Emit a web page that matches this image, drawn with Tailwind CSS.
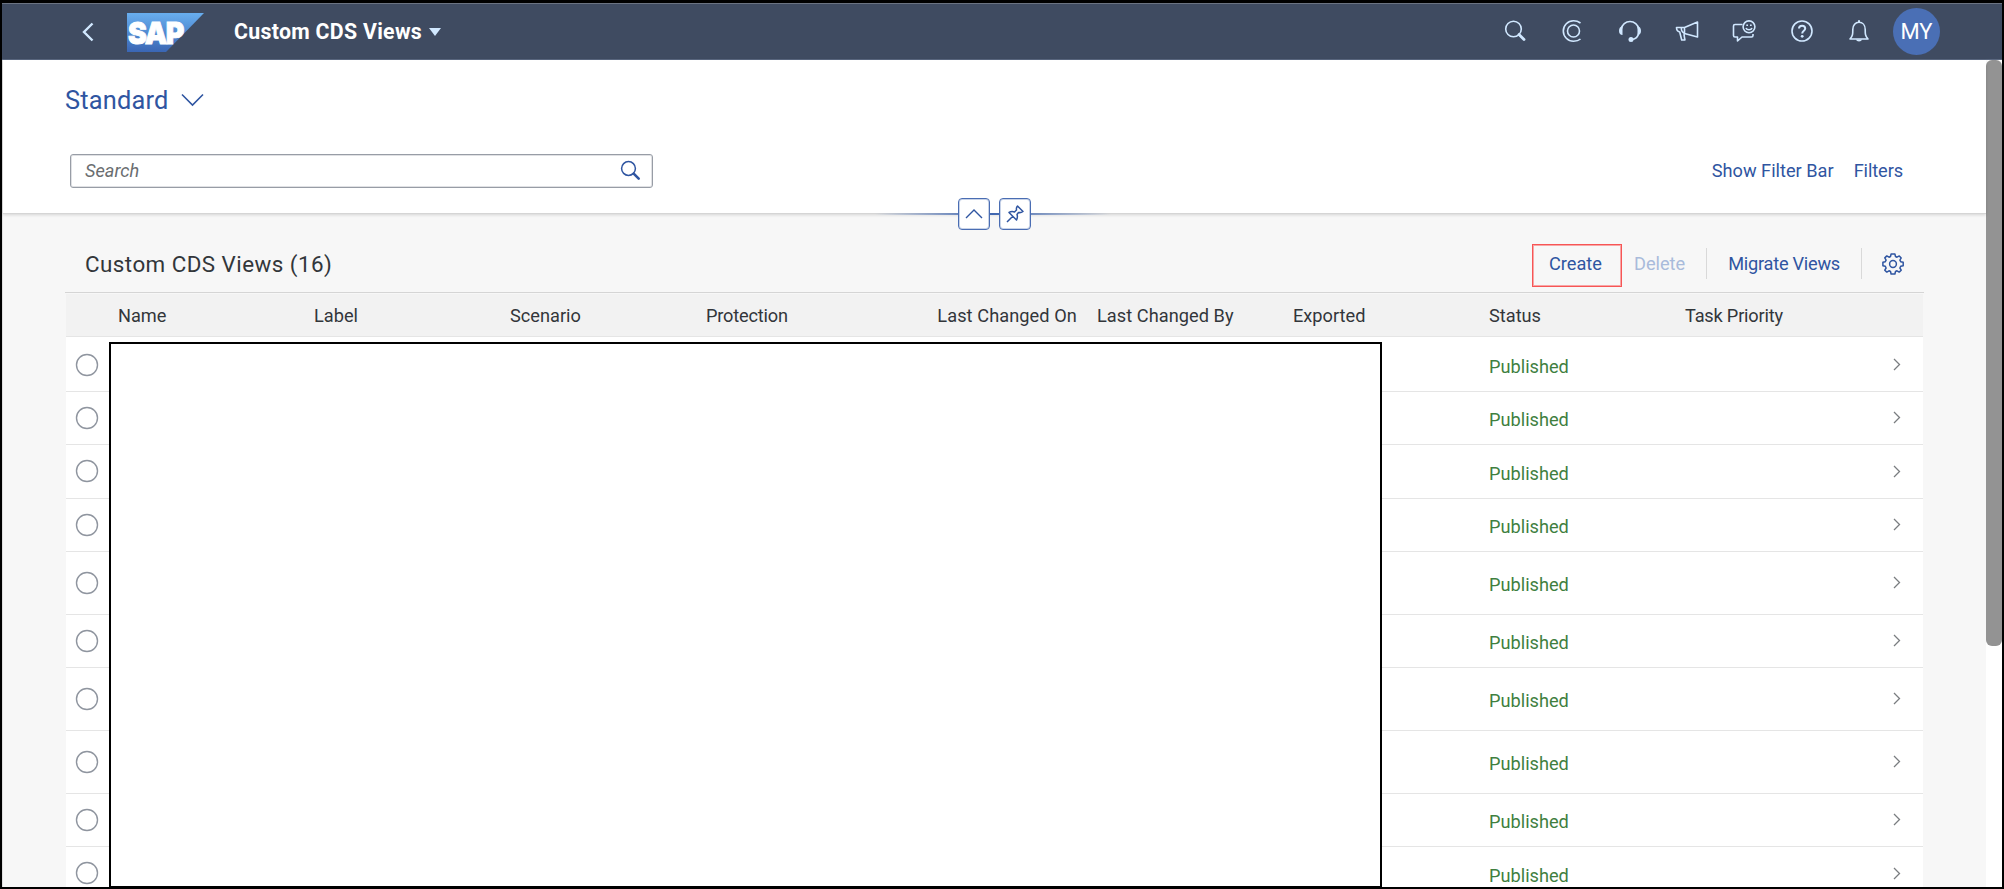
<!DOCTYPE html>
<html lang="en">
<head>
<meta charset="utf-8">
<title>Custom CDS Views</title>
<script src="https://cdn.jsdelivr.net/npm/@tailwindcss/browser@4"></script>
</head>
<body class="w-[2004px] h-[889px] overflow-hidden bg-black font-['Roboto',sans-serif] text-[#32363a] text-[18.2px] whitespace-nowrap">
<div class="relative w-[2004px] h-[889px] overflow-hidden border-l-2 border-r-2 border-t-[3px] border-b-2 border-black bg-[#f7f7f7] flex flex-col">
  <header class="h-[57px] shrink-0 bg-[#3f4b61] border-t border-b border-t-[#6b7382] border-b-[#5b6880] flex items-center">
    <svg class="ml-[80px] shrink-0" width="12" height="20" viewBox="0 0 12 20" fill="none" stroke="#d1e8ff" stroke-width="2.4"><path d="M10.500 1.500 2 10l8.500 8.500"/></svg>
    <svg class="ml-[33px] shrink-0 mt-[2px]" width="77" height="39" viewBox="0 0 77 39"><defs><linearGradient id="g" x1="0" y1="0" x2="0" y2="1"><stop offset="0" stop-color="#68aeef"/><stop offset="1" stop-color="#3a66b4"/></linearGradient></defs><path d="M0 0h77L39 39H0z" fill="url(#g)"/><text x="1" y="30.500" textLength="55" lengthAdjust="spacingAndGlyphs" letter-spacing="-1.500" font-family="Inter" font-weight="900" font-size="30.500" fill="#fff" stroke="#fff" stroke-width="0.900">SAP</text></svg>
    <h1 class="ml-[30px] pt-px text-[21.3px] font-bold text-white tracking-[0.3px]">Custom CDS Views</h1>
    <svg class="ml-[7px] shrink-0" width="12" height="8" viewBox="0 0 12 8"><path d="M0 0h12L6 8z" fill="#d1e8ff"/></svg>
    <div class="ml-auto mr-[62px] flex items-center">
      <div class="flex items-center gap-[33.3px] mr-[22px] pb-px">
        <svg width="24" height="24" viewBox="0 0 24 24" fill="none" stroke="#d1e8ff"><circle cx="10.500" cy="10" r="7.800" stroke-width="1.600"/><path d="m16 15.500 5 5" stroke-width="2.800" stroke-linecap="round"/></svg>
        <svg width="24" height="24" viewBox="0 0 24 24" fill="none" stroke="#d1e8ff" stroke-width="1.600"><circle cx="12.500" cy="12" r="6"/><path d="M19.500 4C17 2.200 14.500 1.800 12.500 1.800a10.200 10.200 0 0 0 0 20.400c2.500 0 5-.4 7-2.200"/></svg>
        <svg width="24" height="24" viewBox="0 0 24 24" fill="none" stroke="#d1e8ff" stroke-width="1.600"><path d="M3.300 10a8.800 8.800 0 0 1 17.400 0M20.700 14.500c-.8 3.500-3.500 5.500-6.500 6"/><path d="M4.500 7.500V16C2.500 16 1 14.500 1 12s1-4.500 3.500-4.500zM19.500 7.500V16c2 0 3.500-1.500 3.500-4s-1-4.500-3.500-4.500z" fill="#d1e8ff" stroke="none"/><circle cx="13" cy="20.500" r="2.500" fill="#d1e8ff" stroke="none"/></svg>
        <svg width="24" height="24" viewBox="0 0 24 24" fill="none" stroke="#d1e8ff" stroke-width="1.600" stroke-linejoin="round"><path d="M22.500 3 9.500 8.500v6L22.500 18zM9.500 8.500h-8c0 2.500 1 4 3.200 4.500l2 8h3.200l-1-6M6.500 8.500c-.5 2 .5 4.500 3 6"/></svg>
        <svg width="24" height="24" viewBox="0 0 24 24" fill="none" stroke="#d1e8ff" stroke-width="1.600" stroke-linejoin="round"><path d="M10.500 5.500H3Q1.500 5.500 1.500 7v9.500Q1.500 18 3 18h2.500v4l4.500-4h9.500q1.500 0 1.500-1.500V15"/><circle cx="17" cy="7.800" r="5.900"/><path d="M14 9c.9 2.300 5.100 2.300 6 0"/><path d="M14.300 6.300h1.700M18 6.300h1.700"/></svg>
        <svg width="24" height="24" viewBox="0 0 24 24" fill="none" stroke="#d1e8ff" stroke-width="1.600"><circle cx="12" cy="12" r="10"/><path d="M9 9.500c0-3.800 6.200-3.800 6.200 0 0 2.200-3 2.300-3 5" stroke-width="2"/><circle cx="12.200" cy="17.300" r="1.400" fill="#d1e8ff" stroke="none"/></svg>
        <svg width="24" height="24" viewBox="0 0 24 24" fill="none" stroke="#d1e8ff" stroke-width="1.600" stroke-linejoin="round"><path d="M3 20C5.800 17 5.800 15 5.800 10.500 5.800 6 8.500 3.300 12 3.300s6.200 2.700 6.200 7.200c0 4.500 0 6.500 2.800 9.500z"/><path d="M12 1.300v2" stroke-width="2"/><path d="M9 20.500h6c-.5 2.600-5.500 2.600-6 0z" fill="#d1e8ff" stroke="none"/></svg>
      </div>
      <div class="size-[47px] rounded-full bg-[#4a6fb5] text-white text-[22px] flex items-center justify-center">MY</div>
    </div>
  </header>
  <div class="flex-1 min-h-0 flex">
    <main class="w-[1984px] flex flex-col border-l border-[#e0e0e0]">
      <section class="h-[154px] shrink-0 bg-white border-b border-[#d5d5d5] shadow-[0_1px_3px_rgba(0,0,0,0.14)] relative">
        <div class="pt-[23px] pl-[62px] h-[93px] flex items-start gap-[12px] text-[#2f55a1]">
          <span class="text-[25.4px] leading-[35px] tracking-[0.2px]">Standard</span>
          <svg class="mt-[10px]" width="23" height="14" viewBox="0 0 23 14" fill="none" stroke="currentColor" stroke-width="1.600"><path d="m1 1.500 10.500 10.500L22 1.500"/></svg>
        </div>
        <div class="flex items-center pl-[67px] pr-[83px] h-[35px] text-[#2f55a1]">
          <div class="w-[583px] h-[34px] border border-[#989da6] ring-1 ring-inset ring-[#989da6]/30 rounded-[3px] bg-white flex items-center justify-between pl-[14px] pr-[11px]">
            <span class="italic text-[#6a6d70] pt-px">Search</span>
            <svg width="21" height="21" viewBox="0 0 21 21" fill="none" stroke="currentColor"><circle cx="8.500" cy="8.500" r="6.900" stroke-width="1.500"/><path d="m13.700 13.700 5 5" stroke-width="2.600" stroke-linecap="round"/></svg>
          </div>
          <span class="ml-auto pt-[1px]">Show Filter Bar</span>
          <span class="ml-[20px] pt-[1px] tracking-[-0.1px]">Filters</span>
        </div>
        <div class="absolute left-[872px] top-[153px] w-[236px] h-[2px] bg-linear-to-r from-[#3f66b0]/0 via-[#3f66b0] to-[#3f66b0]/0"></div>
        <div class="absolute left-[955px] top-[138px] flex gap-[9px] text-[#2f55a1]">
          <div class="size-[32px] border border-[#4a6db3] ring-1 ring-inset ring-[#4a6db3]/30 rounded-[4px] bg-white flex items-center justify-center"><svg width="18" height="10" viewBox="0 0 18 10" fill="none" stroke="currentColor" stroke-width="1.400"><path d="m1 9 8-8 8 8"/></svg></div>
          <div class="size-[32px] border border-[#4a6db3] ring-1 ring-inset ring-[#4a6db3]/30 rounded-[4px] bg-white flex items-center justify-center"><svg width="18" height="18" viewBox="0 0 18 18" fill="none" stroke="currentColor" stroke-width="1.500" stroke-linejoin="round"><path d="M11.500 1 17 6.500q-2 1.500-4.500 1L11 9.500q1 3-.5 5.500L3 7.500Q5.500 6 8.500 7l2-2Q10 2.500 11.500 1zM6.800 11.200 1 17"/></svg></div>
        </div>
      </section>
      <div class="h-[79px] shrink-0 mx-[62px] flex items-center pt-[21px] pl-[20px] pr-[20px] border-b border-[#d5d5d5] text-[#2f55a1] w-[1859px]">
        <h2 class="text-[22.4px] tracking-[0.45px] text-[#32363a] pt-[2px]">Custom CDS Views (16)</h2>
        <div class="ml-auto flex items-center">
          <div class="w-[90px] h-[43px] mt-[3px] border border-[#f75555] ring-1 ring-inset ring-[#f75555]/50 flex items-center justify-center pb-[2px] pr-[3px]">Create</div>
          <span class="ml-[12px] pt-px text-[#a9bbdb]">Delete</span>
          <div class="ml-[21px] w-px h-[31px] bg-[#d9d9d9]"></div>
          <span class="ml-[21px] pt-px tracking-[-0.25px]">Migrate Views</span>
          <div class="ml-[21px] w-px h-[31px] bg-[#d9d9d9]"></div>
          <svg class="ml-[20px]" width="22" height="22" viewBox="0 0 22 22" fill="none" stroke="currentColor" stroke-width="1.500" stroke-linejoin="round"><circle cx="11" cy="11" r="3.400"/><path d="M9.100 1h3.800l.6 2.500 1.500.7 2.300-1.300 1.900 2-1.300 2.200.8 1.600 2.500.6v3.400l-2.500.6-.8 1.700 1.300 2.200-2 1.900-2.200-1.300-1.500.7-.6 2.500H9.100l-.6-2.500-1.500-.7-2.200 1.300-2-1.900 1.300-2.200-.8-1.700-2.400-.6V9.300l2.400-.6.8-1.600L2.800 4.900l2-2L7 4.200l1.500-.7z"/></svg>
        </div>
      </div>
      <div class="mx-[63px] w-[1857px] relative">
        <div class="h-[43px] mt-px bg-[#f2f2f2] border-b border-[#e5e5e5] grid grid-cols-[52px_196px_196px_196px_196px_175px_216px_196px_196px_1fr] items-center pt-[2px]">
          <span></span><span>Name</span><span>Label</span><span>Scenario</span><span class="tracking-[-0.2px]">Protection</span><span class="text-right tracking-[0.08px]">Last Changed On</span><span class="pl-[20px] tracking-[0.05px]">Last Changed By</span><span>Exported</span><span>Status</span><span class="tracking-[-0.2px]">Task Priority</span>
        </div>
        <div id="rows"></div>
        <div class="absolute left-[43px] top-[49px] w-[1273px] h-[546px] border-2 border-black bg-white"></div>
      </div>
    </main>
    <div class="w-[16px] bg-white shrink-0"><div class="h-[586px] rounded-[6px] bg-[#939393]"></div></div>
  </div>
</div>
<template id="row">
  <div class="bg-white border-b border-[#e5e5e5] flex items-center pb-px first:pb-0 first:pt-px">
    <svg class="ml-[9px]" width="24" height="24" viewBox="0 0 24 24"><circle cx="12" cy="12" r="10.500" fill="none" stroke="#8f959f" stroke-width="1.400"/></svg>
    <span class="ml-[1390px] pt-[5px] text-[#3f7f3f]">Published</span>
    <svg class="ml-auto mr-[22px]" width="8" height="13" viewBox="0 0 8 13" fill="none" stroke="#7a7d80" stroke-width="1.300"><path d="m1 1 5.500 5.500L1 12"/></svg>
  </div>
</template>
<script>
  const t = document.getElementById('row'), rows = document.getElementById('rows');
  for (const h of [55, 53, 54, 53, 63, 53, 63, 63, 53, 54]) {
    const n = t.content.firstElementChild.cloneNode(true);
    n.style.height = h + 'px';
    rows.append(n);
  }
</script>
</body>
</html>
